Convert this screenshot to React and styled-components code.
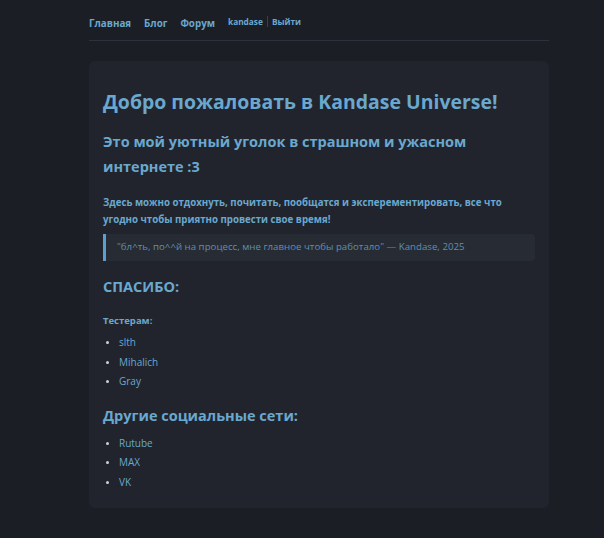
import React from 'react';
import styled, { createGlobalStyle } from 'styled-components';

const GlobalStyle = createGlobalStyle`
  html, body {
    margin: 0;
    padding: 0;
    background: #1b1e25;
  }
  body {
    font-family: "Open Sans", "Noto Sans", sans-serif;
    color: #6aa8cf;
  }
`;

const Page = styled.div`
  width: 460px;
  margin-left: 89px;
  padding-bottom: 32px;
`;

const Header = styled.header`
  display: flex;
  align-items: center;
  gap: 13px;
  height: 40px;
  border-bottom: 1px solid #2c313b;
`;

const NavLink = styled.a`
  font-size: 9.8px;
  font-weight: 700;
  color: #6aa8cf;
  text-decoration: none;
  padding-top: 7px;
`;

const UserBox = styled.div`
  display: flex;
  align-items: center;
  gap: 4px;
  font-size: 8.3px;
  font-weight: 700;
  padding-top: 3px;
`;

const Sep = styled.span`
  width: 1px;
  height: 11px;
  background: #3a404b;
`;

const Card = styled.main`
  margin-top: 20px;
  background: #21242c;
  border-radius: 6px;
  padding: 26px 14px 16px;
`;

const Title = styled.h1`
  margin: 0 0 12px;
  font-size: 19.45px;
  line-height: 30px;
  font-weight: 700;
`;

const Subtitle = styled.h2`
  margin: 0 0 15px;
  font-size: 14.5px;
  line-height: 25px;
  font-weight: 700;
`;

const Lead = styled.p`
  margin: 0 0 6px;
  font-size: 9.7px;
  line-height: 17px;
  font-weight: 700;
`;

const Quote = styled.blockquote`
  margin: 0 0 15px;
  padding: 5px 11px 7px;
  background: #272b33;
  border-left: 3px solid #5b9fcf;
  border-radius: 0 4px 4px 0;
  font-size: 9.7px;
  line-height: 15px;
  color: #5f8fb0;
`;

const Section = styled.h3`
  margin: 0 0 ${p => p.$gap}px;
  font-size: 14.5px;
  line-height: 22px;
  font-weight: 700;
`;

const Label = styled.p`
  margin: 0 0 5px;
  font-size: 9.5px;
  line-height: 14px;
  font-weight: 700;
`;

const List = styled.ul`
  margin: 0 0 ${p => p.$gap || 0}px;
  padding-left: 16px;
  font-size: 10px;
  line-height: 19.5px;
  color: #6aa8cf;

  li::marker {
    color: #c9d3dc;
    font-size: 8px;
  }
`;

const testers = ['slth', 'Mihalich', 'Gray'];
const socials = ['Rutube', 'MAX', 'VK'];

export default function App() {
  return (
    <>
      <GlobalStyle />
      <Page>
        <Header>
          <NavLink href="#">Главная</NavLink>
          <NavLink href="#">Блог</NavLink>
          <NavLink href="#">Форум</NavLink>
          <UserBox>
            <span>kandase</span>
            <Sep />
            <span>Выйти</span>
          </UserBox>
        </Header>
        <Card>
          <Title>Добро пожаловать в Kandase Universe!</Title>
          <Subtitle>Это мой уютный уголок в страшном и ужасном интернете :3</Subtitle>
          <Lead>
            Здесь можно отдохнуть, почитать, пообщатся и эксперементировать, все что угодно чтобы
            приятно провести свое время!
          </Lead>
          <Quote>"бл^ть, по^^й на процесс, мне главное чтобы работало" — Kandase, 2025</Quote>
          <Section $gap={16}>СПАСИБО:</Section>
          <Label>Тестерам:</Label>
          <List $gap={13}>
            {testers.map(t => <li key={t}>{t}</li>)}
          </List>
          <Section $gap={7}>Другие социальные сети:</Section>
          <List>
            {socials.map(s => <li key={s}>{s}</li>)}
          </List>
        </Card>
      </Page>
    </>
  );
}
